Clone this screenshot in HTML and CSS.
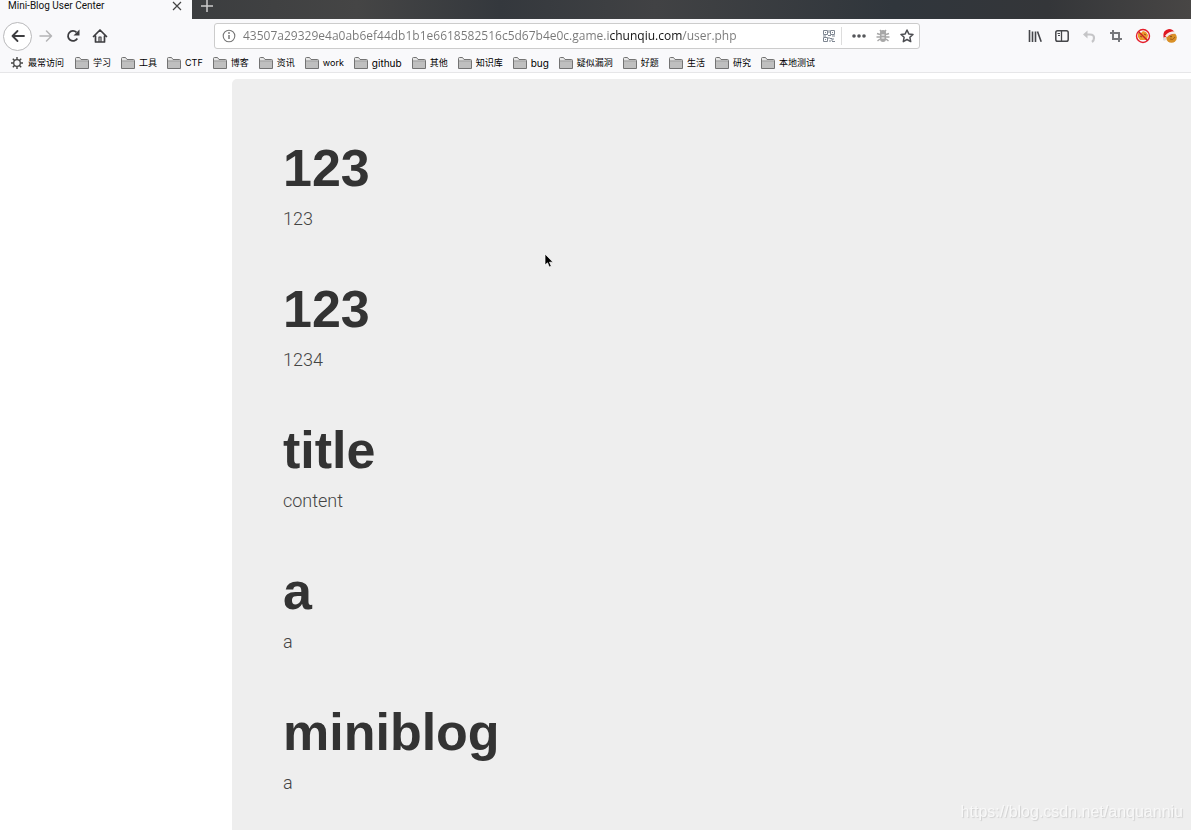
FILE: index.html
```html
<!DOCTYPE html>
<html lang="zh-CN">
<head>
<meta charset="utf-8">
<title>Mini-Blog User Center</title>
<link rel="stylesheet" href="styles.css">
</head>
<body>
<svg class="defs" aria-hidden="true">
  <symbol id="folder" viewBox="0 0 14 12">
    <path d="M.5 11.500V1.500Q.5.500 1.500.500H4.500L6 2.500H12.500Q13.500 2.500 13.500 3.500V11.500Z" fill="#e6e6e6" stroke="#737373"/>
    <path d="M1 4.500H13V11H1Z" fill="#bfbfbf"/>
    <path d="M1 4H13" stroke="#8b8b8b"/>
  </symbol>
</svg>
<header class="browser">
  <div class="tabs">
    <div class="tab">
      <span class="tab-title">Mini-Blog User Center</span>
      <button class="tab-btn" aria-label="Close tab"><svg width="10" height="10" viewBox="0 0 10 10"><path d="M1 1L9 9M9 1L1 9" stroke="#444" stroke-width="1.200"/></svg></button>
    </div>
    <button class="tab-btn tab-new" aria-label="New tab"><svg width="12" height="12" viewBox="0 0 12 12"><path d="M6 0V12M0 6H12" stroke="#ccc" stroke-width="1.500"/></svg></button>
  </div>
  <nav class="toolbar" aria-label="Navigation">
    <button class="tool back" aria-label="Back"><svg width="16" height="16" viewBox="0 0 16 16" fill="none" stroke="#3d3d40" stroke-width="1.800" stroke-linecap="round" stroke-linejoin="round"><path d="M14 8H2.500M7.500 3L2.500 8L7.500 13"/></svg></button>
    <button class="tool" aria-label="Forward"><svg width="16" height="16" viewBox="0 0 16 16" fill="none" stroke="#b4b4b6" stroke-width="1.500" stroke-linecap="round" stroke-linejoin="round"><path d="M2 8H13.500M8.500 3L13.500 8L8.500 13"/></svg></button>
    <button class="tool" aria-label="Reload"><svg width="16" height="16" viewBox="0 0 16 16"><path d="M12.300 10.500A5 5 0 1 1 11.500 4.300" fill="none" stroke="#3d3d40" stroke-width="1.800"/><path d="M14.500 1.500V7.500H8.500Z" fill="#3d3d40"/></svg></button>
    <button class="tool" aria-label="Home"><svg width="16" height="16" viewBox="0 0 16 16" fill="none" stroke="#3d3d40" stroke-width="1.700" stroke-linejoin="round" stroke-linecap="round"><path d="M1.500 8.500L8 2L14.500 8.500M3.500 8V14H12.500V8"/><path d="M7 13.500V9H9V13.500" stroke-width="1.200"/></svg></button>
    <div class="address">
      <svg width="14" height="14" viewBox="0 0 14 14"><circle cx="7" cy="7" r="5.800" fill="none" stroke="#777" stroke-width="1.100"/><path d="M7 6V10" stroke="#777" stroke-width="1.500"/><circle cx="7" cy="4" r=".9" fill="#777"/></svg>
      <input class="url" type="text" aria-label="Address" value="43507a29329e4a0ab6ef44db1b1e6618582516c5d67b4e0c.game.ichunqiu.com/user.php">
      <button class="mini" aria-label="QR code"><svg width="12" height="12" viewBox="0 0 12 12" fill="none" stroke="#7f8792"><path d="M.5.500H4.500V4.500H.5ZM7.500.500H11.500V4.500H7.500ZM.5 7.500H4.500V11.500H.5Z"/><path d="M2 2.500H3M9 2.500H10M2 9.500H3M6 0V3M5 5.500H8M0 6H3M9 6H12M6 7V9M7 8.500H9M10 8V10M6 11H8M9 11.500H12M8 10H10"/></svg></button>
      <span class="rule"></span>
      <button class="mini" aria-label="Page actions"><svg width="14" height="4" viewBox="0 0 14 4" fill="#55565a"><circle cx="2" cy="2" r="1.800"/><circle cx="7" cy="2" r="1.800"/><circle cx="12" cy="2" r="1.800"/></svg></button>
      <button class="mini" aria-label="Debug"><svg width="14" height="14" viewBox="0 0 14 14"><path d="M4 4Q4 1 7 1T10 4V10Q10 13 7 13T4 10Z" fill="#a7a7a7"/><path d="M4 1L5.500 3M10 1L8.500 3M1 4.500L4 5.500M13 4.500L10 5.500M.5 8H4M13.500 8H10M1.500 12L4 10M12.500 12L10 10" stroke="#a7a7a7" stroke-width="1.500"/><path d="M5.500 6H8.500M5.500 9H8.500" stroke="#fff"/></svg></button>
      <button class="mini" aria-label="Bookmark this page"><svg width="14" height="14" viewBox="0 0 14 14"><path d="M7 1L8.800 4.900L13 5.400L9.900 8.300L10.700 12.600L7 10.500L3.300 12.600L4.100 8.300L1 5.400L5.200 4.900Z" fill="none" stroke="#4d4e52" stroke-width="1.500" stroke-linejoin="round"/></svg></button>
    </div>
    <div class="tools">
      <button class="tool" aria-label="Library"><svg width="14" height="14" viewBox="0 0 14 14" fill="none" stroke="#45464a" stroke-width="1.600"><path d="M1.500 1V13M4.500 2.500V13M7.500 2.500V13M9.500 2.500L13.200 12.700"/></svg></button>
      <button class="tool" aria-label="Sidebar"><svg width="14" height="14" viewBox="0 0 14 14" fill="none" stroke="#45464a"><rect x=".8" y="1.800" width="12.400" height="10.400" rx="1.800" stroke-width="1.500"/><path d="M6.500 2V12" stroke-width="1.300"/><path d="M2.500 4.500H5M3 6.500H5"/></svg></button>
      <button class="tool" aria-label="Undo"><svg width="14" height="14" viewBox="0 0 14 14"><path d="M1 5.500L5.500 1.500V9.500Z" fill="#c5c5c7"/><path d="M4 5.500H8Q12 5.500 12 9Q12 11.500 10 13" fill="none" stroke="#c5c5c7" stroke-width="2.200"/></svg></button>
      <button class="tool" aria-label="Screenshot"><svg width="14" height="14" viewBox="0 0 14 14" fill="none" stroke="#77787c" stroke-width="2"><path d="M4 1V10H13M1 4H10V13"/></svg></button>
      <button class="tool" aria-label="Blocker off"><svg width="16" height="16" viewBox="0 0 16 16"><path d="M3 5L6 5L8 3L11 4L13 7L12 12L5 12L3 9Z" fill="#ed9a2d"/><path d="M5 8L7 9M9 6L11 7" stroke="#8c4c16"/><circle cx="8" cy="8" r="6.500" fill="none" stroke="#e51e2b" stroke-width="1.400"/><path d="M3.500 3.500L12.500 12.500" stroke="#c81e25" stroke-width="1.400"/></svg></button>
      <button class="tool" aria-label="Cookie tool"><svg width="16" height="16" viewBox="0 0 16 16"><circle cx="9.500" cy="9.500" r="5.300" fill="#d99027"/><path d="M8 11Q11 13 13 9" fill="none" stroke="#a35c18"/><circle cx="9" cy="8.500" r=".8" fill="#704018"/><path d="M1.500 10Q0 2 7 1Q11 1 13 5L4 9Z" fill="#df1922"/><path d="M4 8.500Q7 4.500 13 4.500" fill="none" stroke="#f6eee9" stroke-width="2.400"/><circle cx="2.500" cy="11" r="1.700" fill="#ddd"/></svg></button>
    </div>
  </nav>
  <nav class="bookmarks" aria-label="Bookmarks">
    <a class="first" href="#"><svg width="12" height="12" viewBox="0 0 12 12" fill="none" stroke="#444"><circle cx="6" cy="6" r="3.300" stroke-width="1.300"/><path d="M6 0V2.500M6 9.500V12M0 6H2.500M9.500 6H12M1.800 1.800L3.500 3.500M8.500 8.500L10.200 10.200M10.200 1.800L8.500 3.500M3.500 8.500L1.800 10.200" stroke-width="1.400"/></svg>最常访问</a>
    <a href="#"><svg width="14" height="12"><use href="#folder"/></svg>学习</a>
    <a href="#"><svg width="14" height="12"><use href="#folder"/></svg>工具</a>
    <a href="#"><svg width="14" height="12"><use href="#folder"/></svg>CTF</a>
    <a href="#"><svg width="14" height="12"><use href="#folder"/></svg>博客</a>
    <a href="#"><svg width="14" height="12"><use href="#folder"/></svg>资讯</a>
    <a href="#"><svg width="14" height="12"><use href="#folder"/></svg>work</a>
    <a class="latin" href="#"><svg width="14" height="12"><use href="#folder"/></svg>github</a>
    <a href="#"><svg width="14" height="12"><use href="#folder"/></svg>其他</a>
    <a href="#"><svg width="14" height="12"><use href="#folder"/></svg>知识库</a>
    <a class="latin" href="#"><svg width="14" height="12"><use href="#folder"/></svg>bug</a>
    <a href="#"><svg width="14" height="12"><use href="#folder"/></svg>疑似漏洞</a>
    <a href="#"><svg width="14" height="12"><use href="#folder"/></svg>好题</a>
    <a href="#"><svg width="14" height="12"><use href="#folder"/></svg>生活</a>
    <a href="#"><svg width="14" height="12"><use href="#folder"/></svg>研究</a>
    <a href="#"><svg width="14" height="12"><use href="#folder"/></svg>本地测试</a>
  </nav>
</header>
<main class="page">
  <div class="jumbotron">
    <article class="post"><h1>123</h1><p>123</p></article>
    <article class="post"><h1>123</h1><p>1234</p></article>
    <article class="post"><h1>title</h1><p>content</p></article>
    <article class="post"><h1>a</h1><p>a</p></article>
    <article class="post"><h1>miniblog</h1><p>a</p></article>
  </div>
</main>
<svg class="cursor" width="10" height="16" viewBox="0 0 10 16" aria-hidden="true"><path d="M1 1V12L3.500 9.800L5.300 14L7.300 13.200L5.500 9.200H9Z" fill="#000" stroke="#fff" stroke-width=".7"/></svg>
<div class="watermark">https://blog.csdn.net/anquanniu</div>
</body>
</html>
```
FILE: styles.css
```css
* { box-sizing: border-box; }
body {
  margin: 0;
  min-height: 100vh;
  display: flex;
  flex-direction: column;
  background: #fff;
  font-family: Inter, "Noto Sans CJK SC", sans-serif;
}
.defs { display: none; }
svg { flex: none; }
button { border: 0; padding: 0; background: none; display: flex; align-items: center; justify-content: center; }
.browser { background: #f9f9fb; border-bottom: 1px solid #e6e6e8; }
.tabs { display: flex; height: 19px; background: linear-gradient(90deg, #3b3d3f 16%, #454545 30%, #34383d 42%, #414244 55%, #30363c 75%, #343639 88%, #484645); }
.tab { width: 192px; background: #f9f9fb; display: flex; justify-content: space-between; padding: 0 10px 0 8px; }
.tab-title { font: 10px/12px Roboto, sans-serif; color: #111; }
.tab-btn { height: 11px; }
.tab-new { margin-left: 9px; }
.toolbar { display: flex; align-items: center; height: 34px; padding: 0 8px 0 3px; }
.tool { width: 27px; height: 28px; }
.back { width: 29px; height: 29px; border: 1px solid #b9b9bb; border-radius: 50%; background: #fff; }
.address {
  flex: 1;
  margin: 0 101px;
  height: 26px;
  display: flex;
  align-items: center;
  padding: 0 0 0 7px;
  background: #fff;
  border: 1px solid #ccc;
  border-radius: 3px;
}
.url {
  flex: 1;
  min-width: 0;
  border: 0;
  padding: 0;
  margin-left: 7px;
  font: 400 12px/20px "Open Sans", sans-serif;
  outline: 0;
  color: transparent;
  background: linear-gradient(90deg, #777 366px, #111 366px, #111 439px, #777 439px) text;
  -webkit-background-clip: text;
}
.mini { width: 24px; height: 20px; }
.rule { width: 1px; height: 18px; margin-right: 5px; background: #ddd; }
.tools { display: flex; }
.bookmarks { display: flex; align-items: center; gap: 10px; height: 19px; padding: 0 11px; }
.bookmarks a { display: flex; align-items: center; gap: 4px; font-size: 9px; line-height: 14px; color: #000; text-decoration: none; white-space: nowrap; }
.bookmarks .latin { font-size: 10px; }
.bookmarks .first { gap: 5px; margin-right: 1px; }
.page { flex: 1; display: flex; padding: 6px 0 0 232px; }
.jumbotron { flex: 1; padding: 56px 51px 20px; background: #eee; border-radius: 5px 0 0 0; color: #333; }
.post { margin-bottom: 48px; }
.post h1 { margin: 0; font: 700 52px/66px "Liberation Sans", Arial, sans-serif; }
.post p { margin: 9px 0 0; font: 300 18px/18px Roboto, sans-serif; color: #444; }
.post:last-child { margin-bottom: 0; }
.cursor { position: absolute; left: 544px; top: 253px; }
.watermark { position: fixed; right: 8px; bottom: 8px; font: 16px/20px "Liberation Sans", Arial, sans-serif; color: #f8f8f8; text-shadow: 1px 1px 1px #d0d0d0; }
```
